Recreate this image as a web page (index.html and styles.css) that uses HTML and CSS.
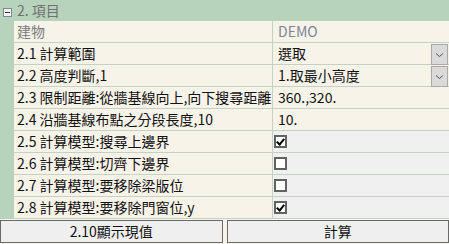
FILE: index.html
```html
<!DOCTYPE html>
<html>
<head>
<meta charset="utf-8">
<link rel="stylesheet" href="styles.css">
</head>
<body>
<div class="panel">
  <div class="header">
    <span class="toggle"><svg width="9" height="9" viewBox="0 0 9 9"><rect x="0.5" y="0.5" width="8" height="8" fill="#f4f4f4" stroke="#7a8a9a"/><line x1="2" y1="4.5" x2="7" y2="4.5" stroke="#333"/></svg></span>
    <span class="title">2. 項目</span>
  </div>
  <div class="grid">
    <div class="gutter"></div>
    <div class="label muted">建物</div>
    <div class="value demo">DEMO</div>

    <div class="label">2.1 計算範圍</div>
    <div class="value select"><span>選取</span><span class="drop"><svg width="9" height="6" viewBox="0 0 9 6"><path d="M1 1.5 L4.5 4.5 L8 1.5" fill="none" stroke="#555" stroke-width="1"/></svg></span></div>

    <div class="label">2.2 高度判斷,1</div>
    <div class="value select"><span>1.取最小高度</span><span class="drop"><svg width="9" height="6" viewBox="0 0 9 6"><path d="M1 1.5 L4.5 4.5 L8 1.5" fill="none" stroke="#555" stroke-width="1"/></svg></span></div>

    <div class="label">2.3 限制距離:從牆基線向上,向下搜尋距離</div>
    <div class="value">360.,320.</div>

    <div class="label">2.4 沿牆基線布點之分段長度,10</div>
    <div class="value">10.</div>

    <div class="label">2.5 計算模型:搜尋上邊界</div>
    <div class="value check"><span class="box on"></span></div>

    <div class="label">2.6 計算模型:切齊下邊界</div>
    <div class="value check"><span class="box"></span></div>

    <div class="label">2.7 計算模型:要移除梁版位</div>
    <div class="value check"><span class="box"></span></div>

    <div class="label">2.8 計算模型:要移除門窗位,y</div>
    <div class="value check"><span class="box on"></span></div>
  </div>
  <div class="buttons">
    <button class="btn">2.10顯示現值</button>
    <button class="btn">計算</button>
  </div>
</div>
</body>
</html>
```
FILE: styles.css
```css
html, body {
  margin: 0;
  padding: 0;
  background: #f7f3e9;
}
.panel {
  width: 449px;
  height: 244px;
  font-family: "Noto Sans CJK TC", "Noto Sans", sans-serif;
  font-size: 14px;
  color: #111;
  overflow: hidden;
}
.header {
  height: 21px;
  background: #b7d3bc;
  display: flex;
  align-items: center;
  gap: 5px;
  padding-left: 3px;
}
.toggle {
  display: flex;
  width: 9px;
  height: 9px;
  margin-top: 3px;
}
.title {
  color: #707070;
  font-size: 14px;
  line-height: 21px;
}
.grid {
  display: grid;
  grid-template-columns: 14px 259px 1fr;
  grid-auto-rows: 22px;
}
.gutter {
  grid-row: 1 / span 9;
  background: #b7d3bc;
}
.label {
  border-bottom: 1px solid #c2d3c3;
  border-right: 1px solid #c2d3c3;
  padding-left: 3px;
  line-height: 21px;
  white-space: nowrap;
  overflow: hidden;
  background: #f7f3e9;
}
.value {
  border-bottom: 1px solid #c2d3c3;
  padding-left: 5px;
  line-height: 21px;
  white-space: nowrap;
  background: #f7f3e9;
}
.muted {
  color: #7a7a7a;
}
.demo {
  color: #7d8696;
}
.select {
  display: flex;
  justify-content: space-between;
  padding-right: 1px;
}
.drop {
  width: 15px;
  height: 19px;
  margin-top: 1px;
  background: #dadada;
  border: 1px solid #a9a9a9;
  display: flex;
  align-items: center;
  justify-content: center;
}
.check {
  background: #f0f0f0;
  display: flex;
  align-items: center;
  padding-left: 1px;
}
.box {
  width: 9px;
  height: 9px;
  border: 2px solid #626262;
  background: #fff;
  position: relative;
}
.box.on::after {
  content: "";
  position: absolute;
  left: 2px;
  top: 0px;
  width: 3px;
  height: 6px;
  border-right: 2px solid #000;
  border-bottom: 2px solid #000;
  transform: rotate(40deg);
}
.buttons {
  display: flex;
  gap: 4px;
  padding-top: 1px;
}
.btn {
  flex: 1;
  height: 23px;
  margin: 0;
  background: #efefef;
  border: 1px solid #6a6a6a;
  font-family: "Noto Sans CJK TC", "Noto Sans", sans-serif;
  font-size: 14px;
  color: #111;
  padding: 0;
  line-height: 21px;
}
```
